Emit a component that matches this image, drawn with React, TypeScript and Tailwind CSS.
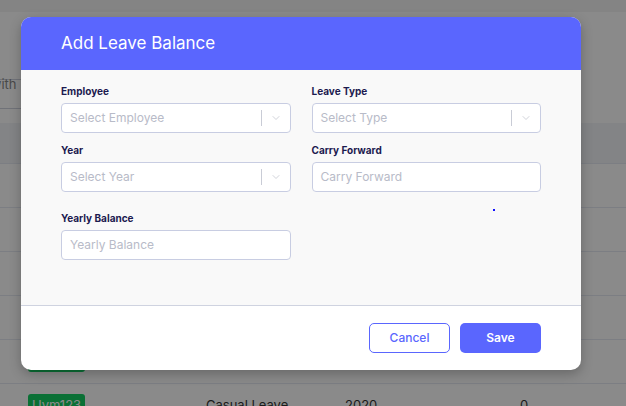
import { ChevronDown } from "lucide-react";

const font = { fontFamily: "Inter, 'Open Sans', sans-serif" };

function Label({ children }: { children: string }) {
    return (
        <label className="mb-[5px] block text-[10px] font-bold leading-[13px] text-[#1c1a4f]">
            {children}
        </label>
    );
}

function SelectBox({ placeholder }: { placeholder: string }) {
    return (
        <div className="flex h-[30px] items-center rounded-[4px] border border-[#c8cde2] bg-white">
            <span className="flex-1 pl-[8px] text-[12px] text-[#b8bbc8]">
                {placeholder}
            </span>
            <span className="h-[16px] w-px bg-[#c9ccd6]" />
            <span className="flex w-[28px] justify-center">
                <ChevronDown className="h-[12px] w-[12px] text-[#b5b8c4]" strokeWidth={1.25} />
            </span>
        </div>
    );
}

function TextBox({ placeholder }: { placeholder: string }) {
    return (
        <div className="flex h-[30px] items-center rounded-[4px] border border-[#c8cde2] bg-white pl-[8px] text-[12px] text-[#b8bbc8]">
            {placeholder}
        </div>
    );
}

function Row({ badge }: { badge?: boolean }) {
    return (
        <div className="flex h-[44px] items-center border-b border-[#e6e9f2] text-[13px] text-[#333]">
            <div className="w-[206px] pl-[28px]">
                {badge && (
                    <span className="rounded-[3px] bg-[#13cf62] px-[4px] py-[3px] text-white">
                        Uym123
                    </span>
                )}
            </div>
            {badge && (
                <>
                    <div className="w-[139px]">Casual Leave</div>
                    <div className="w-[175px]">2020</div>
                    <div>0</div>
                </>
            )}
        </div>
    );
}

export default function App() {
    return (
        <div className="relative h-[406px] w-[626px] overflow-hidden bg-white" style={font}>
            {/* page underneath */}
            <div className="h-[12px] bg-[#f4f4f4]" />
            <div className="h-[67px]" />
            <div className="-ml-[187px] flex h-[30px] w-[227px] items-center border border-[#cfd2de] pl-[130px] text-[13px] text-[#888]">
                Search with name
            </div>
            <div className="h-[14px]" />
            <div className="h-[41px] border-b border-[#e6e9f2] bg-[#f3f4f8]" />
            <Row />
            <Row />
            <Row />
            <Row />
            <Row badge />
            <Row badge />

            {/* overlay */}
            <div className="absolute inset-0 bg-black/[0.46]" />

            {/* modal */}
            <div className="absolute left-[21px] top-[17px] w-[560px] overflow-hidden rounded-[10px] bg-white shadow-[0_4px_12px_rgba(0,0,0,0.25)]">
                <div className="flex h-[53px] items-center bg-[#5a66fe] pl-[40px] text-[17px] text-white">
                    Add Leave Balance
                </div>
                <div className="h-[236px] border-b border-[#cfd3e0] bg-[#f9f9f9] px-[40px] pt-[15px]">
                    <div className="grid grid-cols-2 gap-x-[21px]">
                        <div>
                            <Label>Employee</Label>
                            <SelectBox placeholder="Select Employee" />
                        </div>
                        <div>
                            <Label>Leave Type</Label>
                            <SelectBox placeholder="Select Type" />
                        </div>
                        <div className="mt-[11px]">
                            <Label>Year</Label>
                            <SelectBox placeholder="Select Year" />
                        </div>
                        <div className="mt-[11px]">
                            <Label>Carry Forward</Label>
                            <TextBox placeholder="Carry Forward" />
                        </div>
                        <div className="mt-[20px]">
                            <Label>Yearly Balance</Label>
                            <TextBox placeholder="Yearly Balance" />
                        </div>
                        <div className="mt-[20px] flex justify-end pr-[46px]">
                            <span className="mt-[-3px] h-[2px] w-[2px] bg-[#1010ff]" />
                        </div>
                    </div>
                </div>
                <div className="flex h-[64px] items-center justify-end gap-[10px] pr-[40px]">
                    <button className="h-[30px] w-[81px] rounded-[5px] border border-[#5a66fe] bg-white text-[12px] font-medium text-[#5a66fe]">
                        Cancel
                    </button>
                    <button className="h-[30px] w-[81px] rounded-[5px] bg-[#5a66fe] text-[12px] font-semibold text-white">
                        Save
                    </button>
                </div>
            </div>
        </div>
    );
}
